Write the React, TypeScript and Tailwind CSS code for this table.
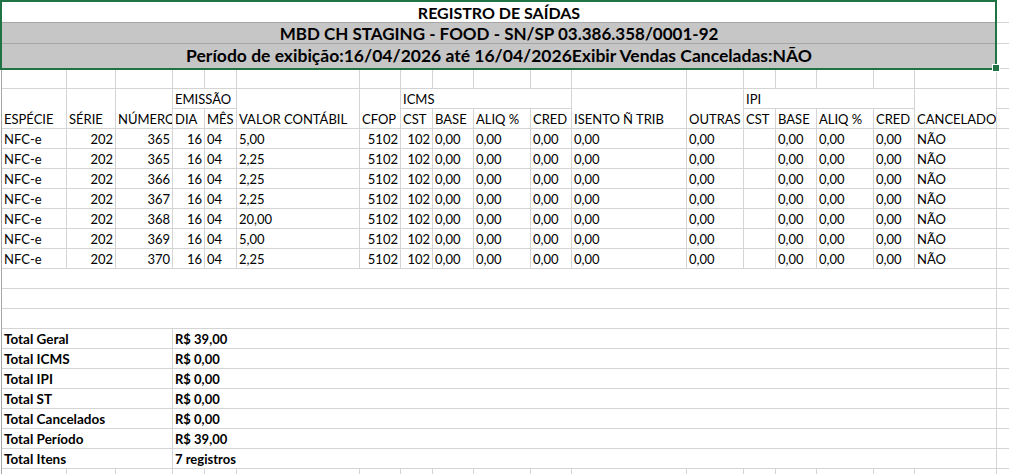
import React from 'react';

const rows = [
  { num: '365', valor: '5,00' },
  { num: '365', valor: '2,25' },
  { num: '366', valor: '2,25' },
  { num: '367', valor: '2,25' },
  { num: '368', valor: '20,00' },
  { num: '369', valor: '5,00' },
  { num: '370', valor: '2,25' },
];

const totals = [
  ['Total Geral', 'R$ 39,00'],
  ['Total ICMS', 'R$ 0,00'],
  ['Total IPI', 'R$ 0,00'],
  ['Total ST', 'R$ 0,00'],
  ['Total Cancelados', 'R$ 0,00'],
  ['Total Período', 'R$ 39,00'],
  ['Total Itens', '7 registros'],
];

type CellProps = { children?: React.ReactNode; className?: string; right?: boolean };

const Cell = ({ children, className = '', right }: CellProps) => (
  <div
    className={`flex items-end overflow-hidden whitespace-nowrap border-r border-b border-[#d4d4d4] px-[2px] pb-[1px] leading-[16px] ${
      right ? 'justify-end' : 'justify-start'
    } ${className}`}
  >
    {children}
  </div>
);

const Blank = ({ n }: { n: number }) => (
  <>
    {Array.from({ length: n }).map((_, i) => (
      <Cell key={i} />
    ))}
  </>
);

const App = () => {
  return (
    <div className="relative w-[1009px] h-[474px] overflow-hidden bg-white text-black font-[Lato,sans-serif] text-[13px]">
      <div className="ml-px border-l border-[#a6a6a6] grid grid-cols-[65px_49px_57px_32px_32px_123px_41px_32px_41px_57px_41px_115px_57px_32px_41px_57px_41px_82px_64px] grid-rows-[23px_21px_25px_repeat(22,20px)]">
        {/* title block */}
        <Cell className="col-span-18 font-bold text-[16px] border-b-[#a6a6a6]">
          <span className="w-full text-center">REGISTRO DE SAÍDAS</span>
        </Cell>
        <Cell />
        <Cell className="col-span-18 bg-[#c6c6c6] font-bold text-[17px] border-b-[#a6a6a6]">
          <span className="w-full text-center">MBD CH STAGING - FOOD - SN/SP 03.386.358/0001-92</span>
        </Cell>
        <Cell />
        <Cell className="col-span-18 bg-[#c6c6c6] font-bold text-[17.5px] leading-[20px] pb-[2px]">
          <span className="w-full text-center">
            Período de exibição:16/04/2026 até 16/04/2026Exibir Vendas Canceladas:NÃO
          </span>
        </Cell>
        <Cell />

        <Blank n={19} />

        {/* header */}
        <Cell className="row-span-2">ESPÉCIE</Cell>
        <Cell className="row-span-2">SÉRIE</Cell>
        <Cell className="row-span-2">NÚMERO</Cell>
        <Cell className="col-span-2">EMISSÃO</Cell>
        <Cell className="row-span-2">VALOR CONTÁBIL</Cell>
        <Cell className="row-span-2">CFOP</Cell>
        <Cell className="col-span-4">ICMS</Cell>
        <Cell className="row-span-2">ISENTO Ñ TRIB</Cell>
        <Cell className="row-span-2">OUTRAS</Cell>
        <Cell className="col-span-4">IPI</Cell>
        <Cell className="row-span-2">CANCELADO</Cell>
        <Cell />
        <Cell>DIA</Cell>
        <Cell>MÊS</Cell>
        <Cell>CST</Cell>
        <Cell>BASE</Cell>
        <Cell>ALIQ %</Cell>
        <Cell>CRED</Cell>
        <Cell>CST</Cell>
        <Cell>BASE</Cell>
        <Cell>ALIQ %</Cell>
        <Cell>CRED</Cell>
        <Cell />

        {/* data rows */}
        {rows.map((r, i) => (
          <React.Fragment key={i}>
            <Cell>NFC-e</Cell>
            <Cell right>202</Cell>
            <Cell right>{r.num}</Cell>
            <Cell right>16</Cell>
            <Cell>04</Cell>
            <Cell>{r.valor}</Cell>
            <Cell right>5102</Cell>
            <Cell right>102</Cell>
            <Cell>0,00</Cell>
            <Cell>0,00</Cell>
            <Cell>0,00</Cell>
            <Cell>0,00</Cell>
            <Cell>0,00</Cell>
            <Cell />
            <Cell>0,00</Cell>
            <Cell>0,00</Cell>
            <Cell>0,00</Cell>
            <Cell>NÃO</Cell>
            <Cell />
          </React.Fragment>
        ))}

        {[0, 1, 2].map((i) => (
          <React.Fragment key={i}>
            <Cell className="col-span-18" />
            <Cell />
          </React.Fragment>
        ))}

        {/* totals */}
        {totals.map(([label, value]) => (
          <React.Fragment key={label}>
            <Cell className="col-span-3 font-bold text-[13.5px]">{label}</Cell>
            <Cell className="col-span-15 font-bold text-[13px]">{value}</Cell>
            <Cell />
          </React.Fragment>
        ))}

        <Blank n={19} />
        <Blank n={19} />
      </div>

      {/* selection */}
      <div className="absolute left-0 top-0 w-[997px] h-[70px] border-2 border-[#217346] pointer-events-none" />
      <div className="absolute left-[992px] top-[64px] w-[8px] h-[8px] bg-[#217346] border border-white" />
    </div>
  );
};

export default App;
